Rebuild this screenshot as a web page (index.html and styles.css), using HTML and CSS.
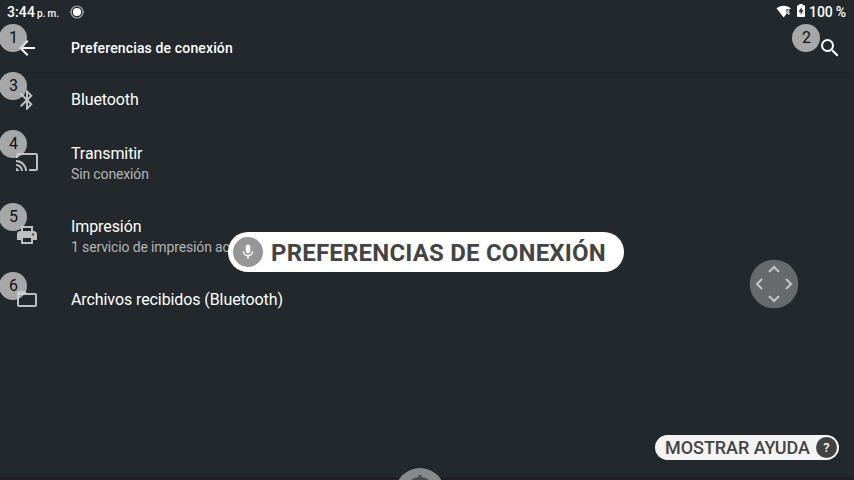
FILE: index.html
```html
<!DOCTYPE html>
<html lang="es">
<head>
<meta charset="utf-8">
<title>Preferencias de conexión</title>
<link rel="stylesheet" href="styles.css">
</head>
<body>
<div class="screen">
  <header class="status">
    <span class="time">3:44</span><span class="ampm">p. m.</span>
    <svg class="access" width="16" height="16" viewBox="0 0 16 16"><circle cx="8" cy="8" r="5.9" fill="none" stroke="#96999b" stroke-width="1.4"/><path d="M.8 8h2.2M13 8h2.2" stroke="#96999b" stroke-width="1.6"/><circle cx="8" cy="8" r="4.1" fill="#fff"/></svg>
    <div class="right">
      <svg class="wifi" width="16" height="14" viewBox="0 0 16 14"><path d="M.5 3.2C4.5-.2 11-.2 14.8 3.2L7.7 12.5z" fill="#fff"/><path d="M10 4h4.8v7h-4.8z" fill="#22282c" opacity=".6"/><path d="M12.7 5v5M12.7 5l-2.2 3.2h3.7" fill="none" stroke="#ddd" stroke-width="1"/></svg>
      <svg class="battery" width="8" height="14" viewBox="0 0 8 14"><path d="M2.3 0h3.4v1.3H7.2q.8 0 .8.8V12.2q0 .8-.8.8H.8q-.8 0-.8-.8V2.1q0-.8.8-.8h1.5z" fill="#fff"/><path d="M4.7 3L1.6 7.7h2v3.3L6.5 6.3h-1.8z" fill="#22282c"/></svg>
      <span class="percent">100 %</span>
    </div>
  </header>
  <div class="appbar">
    <span class="slot"><svg width="24" height="24" viewBox="0 0 24 24"><path d="M20 11H7.83l5.59-5.59L12 4l-8 8 8 8 1.41-1.41L7.83 13H20z" fill="#fff"/></svg></span>
    <h1>Preferencias de conexión</h1>
    <svg class="search" width="24" height="24" viewBox="0 0 24 24"><path d="M15.5 14h-.79l-.28-.27A6.47 6.47 0 0 0 16 9.5 6.5 6.5 0 1 0 9.5 16c1.61 0 3.09-.59 4.23-1.57l.27.28v.79l5 4.99L20.49 19zm-6 0a4.5 4.5 0 1 1 0-9 4.5 4.5 0 0 1 0 9z" fill="#fff"/></svg>
  </div>
  <main>
    <div class="row single">
      <span class="slot"><svg width="24" height="24" viewBox="0 0 24 24"><path d="M17.71 7.71L12 2h-1v7.59L6.41 5 5 6.41 10.59 12 5 17.59 6.41 19 11 14.41V22h1l5.71-5.71-4.3-4.29zM13 5.83l1.88 1.88L13 9.59zm1.88 10.46L13 18.17v-3.76z"/></svg></span>
      <div class="label">Bluetooth</div>
    </div>
    <div class="row">
      <span class="slot"><svg class="cast" width="24" height="24" viewBox="0 0 24 24"><path d="M21 3H3c-1.1 0-2 .9-2 2v3h2V5h18v14h-7v2h7c1.1 0 2-.9 2-2V5c0-1.1-.9-2-2-2zM1 18v3h3c0-1.66-1.34-3-3-3zm0-4v2a5 5 0 0 1 5 5h2a7 7 0 0 0-7-7zm0-4v2a9 9 0 0 1 9 9h2A11 11 0 0 0 1 10z"/></svg></span>
      <div class="label">Transmitir<small>Sin conexión</small></div>
    </div>
    <div class="row">
      <span class="slot"><svg class="printer" width="24" height="24" viewBox="0 0 24 24"><path fill-rule="evenodd" d="M19 8h-1V3H6v5H5c-1.66 0-3 1.34-3 3v6h4v4h12v-4h4v-6c0-1.66-1.34-3-3-3zM8 5h8v3H8zm8 14H8v-4h8zm2-6.5a1 1 0 1 1 0-2 1 1 0 0 1 0 2z"/></svg></span>
      <div class="label">Impresión<small>1 servicio de impresión activado</small></div>
    </div>
    <div class="row single last">
      <span class="slot"><svg class="folder" width="24" height="24" viewBox="0 0 24 24"><path fill-rule="evenodd" d="M20 6h-8l-2-2H4c-1.1 0-2 .9-2 2v12c0 1.1.9 2 2 2h16c1.1 0 2-.9 2-2V8c0-1.1-.9-2-2-2zM4 8h16v10H4z"/></svg></span>
      <div class="label">Archivos recibidos (Bluetooth)</div>
    </div>
  </main>
  <div class="edge"></div>

  <span class="badge b1">1</span>
  <span class="badge b2">2</span>
  <span class="badge b3">3</span>
  <span class="badge b4">4</span>
  <span class="badge b5">5</span>
  <span class="badge b6">6</span>

  <div class="voice">
    <span class="mic"><svg width="18" height="18" viewBox="0 0 24 24"><path d="M12 14c1.66 0 3-1.34 3-3V5a3 3 0 0 0-6 0v6c0 1.66 1.34 3 3 3zm5.3-3c0 3-2.54 5.1-5.3 5.1S6.7 14 6.7 11H5c0 3.41 2.72 6.23 6 6.72V21h2v-3.28c3.28-.48 6-3.3 6-6.72z" fill="#fff"/></svg></span>
    <span class="command">PREFERENCIAS DE CONEXIÓN</span>
  </div>
  <svg class="pad" width="50" height="50" viewBox="0 0 50 50"><circle cx="25" cy="25" r="24.3" fill="#666a6c"/><path d="M20 13l5-5 5 5M20 37l5 5 5-5M13 20l-5 5 5 5M37 20l5 5-5 5" fill="none" stroke="#c4c6c7" stroke-width="2"/></svg>
  <div class="help"><span class="helptext">MOSTRAR AYUDA</span><span class="question">?</span></div>
  <svg class="assist" width="50" height="12" viewBox="0 0 50 12"><circle cx="25" cy="25" r="25" fill="#88898b"/><circle cx="25" cy="25" r="16" fill="#4a4a4c"/><path d="M23.5 7h3v3h-3z" fill="#4a4a4c"/></svg>
</div>
</body>
</html>
```
FILE: styles.css
```css
* { box-sizing: border-box; }
body { margin: 0; background: #22282c; font-family: Roboto, sans-serif; color: #fff; }
.screen { position: relative; width: 854px; height: 480px; overflow: hidden; display: flex; flex-direction: column; }
.status { height: 24px; display: flex; align-items: center; padding: 0 8px 0 7px; flex: none; font-weight: 500; }
.time { font-size: 14px; letter-spacing: .1px; line-height: 24px; }
.ampm { font-size: 10px; letter-spacing: -.1px; margin: 3px 0 0 2px; white-space: nowrap; }
.access { margin-left: 10px; }
.right { display: flex; align-items: center; margin-left: auto; }
.wifi { margin-right: 5px; }
.battery { margin: -3px 4px 0 0; }
.percent { font-size: 14px; letter-spacing: -.15px; white-space: nowrap; }
.appbar { height: 49px; display: flex; align-items: center; padding-right: 12px; flex: none; border-bottom: 1px solid #1e2428; }
.slot { width: 56px; margin-left: 15px; display: flex; align-items: center; flex: none; }
h1 { margin: 0; font-size: 14px; font-weight: 500; letter-spacing: .14px; white-space: nowrap; }
.search { margin-left: auto; }
main { flex: 1; margin-top: -1px; }
.row { height: 73px; display: flex; align-items: center; }
.row.single { height: 55px; }
.row.last { height: 53px; }
.row svg { fill: #bdbfc0; }
.cast { margin-top: -4px; }
.printer { margin-top: -4px; }
.folder { margin-top: -2px; }
.label { font-size: 16px; letter-spacing: -.09px; line-height: 20px; white-space: nowrap; }
.label small { display: block; font-size: 14px; letter-spacing: -.14px; line-height: 20px; color: #b2b5b7; }
.edge { height: 3px; background: #211f26; flex: none; }
.badge { position: absolute; left: -1px; width: 28px; height: 28px; border-radius: 50%; background: rgba(208, 208, 208, .76); color: #111; font-size: 16px; line-height: 28px; text-align: center; padding-left: 1px; }
.b1 { top: 24px; }
.b2 { top: 24px; left: 792px; }
.b3 { top: 72px; }
.b4 { top: 130px; }
.b5 { top: 203px; }
.b6 { top: 272px; }
.voice { position: absolute; left: 228px; top: 232px; width: 396px; height: 40px; border-radius: 20px; background: #fff; display: flex; align-items: center; padding-left: 5px; color: #444; }
.mic { width: 30px; height: 30px; border-radius: 50%; background: #969696; display: flex; align-items: center; justify-content: center; margin-right: 8px; }
.command { font-size: 24px; font-weight: 700; letter-spacing: .2px; padding-top: 2px; white-space: nowrap; }
.pad { position: absolute; left: 749px; top: 259px; }
.help { position: absolute; left: 655px; top: 435px; width: 184px; height: 25px; border-radius: 13px; background: #f4f4f4; color: #444; display: flex; align-items: center; justify-content: space-between; padding: 0 2px 0 10px; }
.helptext { font-size: 18px; font-weight: 500; letter-spacing: -.05px; white-space: nowrap; }
.question { width: 21px; height: 21px; border-radius: 50%; background: #424242; color: #fff; font-size: 13px; font-weight: 500; line-height: 21px; text-align: center; }
.assist { position: absolute; left: 395px; bottom: 0; }
```
